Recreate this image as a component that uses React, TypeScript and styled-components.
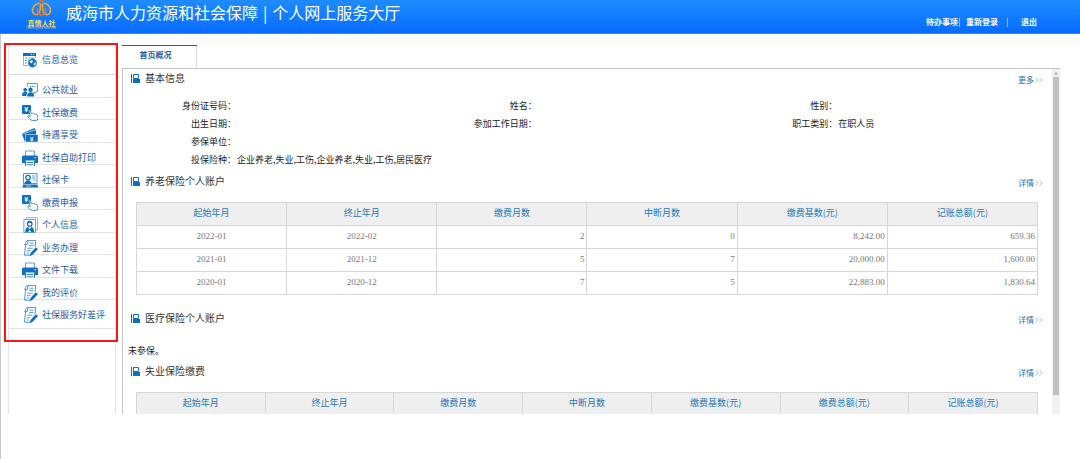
import React from "react";
import styled, { createGlobalStyle } from "styled-components";

const BLUE = "#0f6fc0";
const SANS = '"Noto Sans CJK SC", "Liberation Sans", sans-serif';

const GlobalStyle = createGlobalStyle`
  * { box-sizing: border-box; }
  body { margin: 0; background: #fff; font-family: ${SANS}; font-size: 9px; color: #333; }
  h1, h2, p, ul, dl, dd, dt { margin: 0; padding: 0; font-weight: 400; }
  ul { list-style: none; }
  a { text-decoration: none; }
`;

const Page = styled.div`
  display: flex;
  flex-direction: column;
  height: 100vh;
  border-left: 1px solid #c8c8c8;
`;

const Header = styled.header`
  display: flex;
  align-items: flex-start;
  flex: none;
  height: 34px;
  padding: 0 43px 0 26px;
  margin-left: -1px;
  background: linear-gradient(#1e8cff, #076bff);
  border-bottom: 1px solid #3a86f5;
`;

const Logo = styled.svg`
  flex: none;
  width: 30px;
  height: 32px;
`;

const SiteTitle = styled.h1`
  display: flex;
  align-items: center;
  flex: 1;
  padding: 2px 0 0 10px;
  color: #fff;
  font-size: 16px;
  line-height: 20px;
  white-space: nowrap;
  span { padding: 0 5px; }
`;

const UserLinks = styled.nav`
  display: flex;
  align-items: center;
  padding-top: 15px;
  line-height: 14px;
  font-size: 8px;
`;

const UserLink = styled.a`
  color: #fff;
  font-weight: 700;
`;

const Divider = styled.span<{ $before: number; $after: number }>`
  width: 1px;
  height: 9px;
  margin: 0 ${(p) => p.$after}px 0 ${(p) => p.$before}px;
  background: #8fc0ff;
`;

const Body = styled.div`
  display: flex;
  flex: 1;
  gap: 6px;
  min-height: 0;
  padding: 11px 20px 45px 7px;
`;

const Sidebar = styled.aside`
  flex: none;
  width: 108px;
  border: solid #e4e4e4;
  border-width: 0 1px;
`;

const Menu = styled.nav`
  position: relative;
`;

const Highlight = styled.div`
  position: absolute;
  inset: -2px -3px -13px -5px;
  border: 2px solid #f5161c;
  pointer-events: none;
`;

const MenuItem = styled.li`
  height: 22px;
  border-bottom: 1px solid #e4e4e4;
  &:nth-child(even) { height: 23px; }
  &:first-child { height: 30px; border-color: #d4d4d4; }
  &:last-child { height: 29px; }
`;

const MenuLink = styled.a`
  display: flex;
  align-items: center;
  gap: 4px;
  padding: 6px 0 0 13px;
  line-height: 17px;
  color: #1c5ea8;
  white-space: nowrap;
`;

const IconSvg = styled.svg`
  flex: none;
  width: 16px;
  height: 16px;
`;

const Main = styled.main`
  display: flex;
  flex: 1;
  flex-direction: column;
  min-width: 0;
`;

const Tab = styled.button`
  align-self: flex-start;
  flex: none;
  width: 75px;
  height: 23px;
  padding: 0 8px 3px 0;
  border: 0;
  background: linear-gradient(#1a5cb0, #1a5cb0) top / 100% 1px no-repeat,
    linear-gradient(#dcdcdc, #dcdcdc) right / 1px 100% no-repeat, #fff;
  color: #1c5ea8;
  font: 700 8px/14px ${SANS};
`;

const Panel = styled.div`
  display: flex;
  flex: 1;
  min-height: 0;
  border: solid #c4c4c4;
  border-width: 1px 0 0 1px;
`;

const Content = styled.div`
  flex: 1;
  min-width: 0;
  overflow: hidden;
`;

const ScrollTrack = styled.div`
  display: flex;
  flex-direction: column;
  align-items: center;
  flex: none;
  width: 8px;
  padding-bottom: 19px;
  background: #f1f1f1;
`;

const ScrollArrow = styled.svg`
  flex: none;
  width: 8px;
  height: 8px;
`;

const ScrollThumb = styled.div`
  flex: 1;
  width: 6px;
  background: #c1c1c1;
`;

const Section = styled.section<{ $top?: number }>`
  padding-top: ${(p) => p.$top ?? 0}px;
`;

const SectionHead = styled.div`
  display: flex;
  align-items: flex-end;
  padding: 0 9px 0 8px;
`;

const SectionIcon = styled.svg`
  width: 9px;
  height: 9px;
  margin-bottom: 4px;
`;

const SectionTitle = styled.h2`
  flex: 1;
  padding-left: 5px;
  font-size: 10px;
  line-height: 18px;
`;

const MoreLink = styled.a`
  display: flex;
  align-items: center;
  gap: 1px;
  color: #2478b8;
  font-size: 8px;
  line-height: 14px;
`;

const Chevrons = styled.svg`
  width: 8px;
  height: 6px;
`;

const InfoList = styled.dl`
  display: grid;
  grid-template-columns: repeat(3, 1fr);
  grid-auto-rows: 18px;
  margin: 10px 14px 0 13px;
  line-height: 18px;
`;

const InfoItem = styled.div<{ $wide?: boolean }>`
  display: flex;
  gap: 1px;
  grid-column: ${(p) => (p.$wide ? "1 / -1" : "auto")};
  dt { width: 100px; text-align: right; color: #222; }
  dd { color: #222; }
`;

const Table = styled.table`
  width: calc(100% - 27px);
  margin: 12px 14px 0 13px;
  table-layout: fixed;
  border-collapse: separate;
  border-spacing: 0;
  border: solid #d6d6d6;
  border-width: 1px 0 0 1px;
  line-height: 14px;
`;

const HeadCell = styled.th`
  height: 23px;
  padding: 0 0 3px;
  border: solid #d6d6d6;
  border-width: 0 1px 1px 0;
  background: #efefef;
  color: #2478b8;
  font-weight: 400;
`;

const Cell = styled.td<{ $right: boolean }>`
  height: 23px;
  padding: 0 2px 3px;
  border: solid #d6d6d6;
  border-width: 0 1px 1px 0;
  color: #777;
  font-family: "Liberation Serif", serif;
  text-align: ${(p) => (p.$right ? "right" : "center")};
`;

const Notice = styled.p`
  padding: 16px 0 0 5px;
  line-height: 16px;
  color: #222;
`;

type IconName = "overview" | "jobs" | "pay" | "benefit" | "print" | "card" | "profile" | "form";

const shapes: Record<IconName, React.ReactNode> = {
  overview: (
    <>
      <path d="M1 1h13v3H1z" fill={BLUE} />
      <path d="M9 2.500h1M11 2.500h1" stroke="#fff" />
      <path d="M1.500 4v9.500H6M13.500 4v2" fill="none" stroke="#5b9bd3" strokeWidth=".7" />
      <path d="M3 6h2M6 6h2M9 6h3M3 8.500h2M6 8.500h1M3 11h2" stroke="#5b9bd3" />
      <circle cx="10.500" cy="11" r="4.400" fill={BLUE} />
      <path d="M7.500 9.500l2.500-1.500 1 1.500-1.800 2zM12 11l2-.8-.8 3-1.500 0z" fill="#fff" />
    </>
  ),
  jobs: (
    <>
      <path d="M5.500 4.500v-3h10v8.500h-2l-1 1.500-.6-1.500H11" fill="none" stroke="#3d8acb" strokeWidth=".8" />
      <path d="M8 4.500h1M10.200 4.500h1M12.400 4.500h1" stroke={BLUE} />
      <circle cx="3.200" cy="7.800" r="1.900" fill={BLUE} />
      <circle cx="8.500" cy="7.800" r="2.200" fill={BLUE} />
      <path d="M0 14c0-3 1-4.300 3.300-4.300 1 0 1.700.4 2.200 1C4.700 11.500 4.500 12.500 4.500 14z" fill={BLUE} />
      <path d="M5.200 14.500c0-3 1.200-4.300 3.500-4.300s3.500 1.300 3.500 4.300z" fill={BLUE} />
    </>
  ),
  pay: (
    <>
      <rect x="0" y="0" width="9" height="9" rx="1" fill={BLUE} />
      <text x="4.300" y="7" fill="#fff" fontSize="7" fontWeight="700" textAnchor="middle" fontFamily="Liberation Sans">¥</text>
      <path d="M6.800 5.600c.9-.8 1.700-.2 1.900.6l.7 2.600c.5-.7 1.600-.6 1.900.1.600-.5 1.600-.3 1.900.4.800-.3 1.900 0 2.100.8.600 1.500.6 2.800.1 5l-5.200.6c-1.500-.9-3.200-2.200-4.300-3.500-.6-.9.400-1.900 1.400-1.200l1 .6z" fill="#fff" stroke="#2f82c8" strokeWidth=".9" />
    </>
  ),
  benefit: (
    <>
      <path d="M0 6.500L12.500 1l1.500 2.500L5 7z" fill={BLUE} />
      <path d="M0 7l14-3.500V9L3 15z" fill={BLUE} />
      <path d="M3.500 7.500H16V15H3.500z" fill={BLUE} stroke="#fff" strokeWidth=".5" />
      <path d="M13 2.900L1.500 6.700" stroke="#fff" strokeWidth=".6" />
      <text x="9.700" y="13.700" fill="#fff" fontSize="6" fontWeight="700" textAnchor="middle" fontFamily="Liberation Sans">¥</text>
    </>
  ),
  print: (
    <>
      <path d="M3.500 6V1h9v5" fill="#fff" stroke="#3d8acb" strokeWidth=".8" />
      <path d="M0 7q0-1.500 1.500-1.500h13Q16 5.500 16 7v6H0z" fill={BLUE} />
      <path d="M3.200 10.500h9.600V16H3.200z" fill="#fff" />
      <path d="M3.500 16v-5.200M12.500 16v-5.200M4.800 12.500h6.400M4.800 14.800h6.400" stroke={BLUE} strokeWidth=".9" />
      <path d="M12.500 7.800h1.700" stroke="#fff" strokeWidth=".9" />
    </>
  ),
  card: (
    <>
      <path d="M1.500 1.500h13.500v10H1.500z" fill="none" stroke="#3d8acb" strokeWidth=".9" />
      <circle cx="6" cy="5.500" r="2.200" fill="#fff" stroke={BLUE} strokeWidth="1.300" />
      <path d="M2.500 12c.2-2.500 1.500-3.700 3.500-3.700s3.300 1.200 3.500 3.700z" fill={BLUE} />
      <path d="M9.800 4h3.700M9.800 6h3.700M10.500 8h3" stroke="#3d8acb" strokeWidth=".8" />
      <path d="M1 12.500h14.500l.5 3H.5z" fill={BLUE} />
      <path d="M4 14h5" stroke="#fff" strokeWidth=".7" />
    </>
  ),
  profile: (
    <>
      <path d="M4 2.500V.7h11.500v12.600h-1.500" fill="none" stroke="#5b9bd3" strokeWidth=".7" />
      <path d="M1.900 2.500h11.600v13H1.900z" fill="#fff" stroke="#3d8acb" strokeWidth=".8" />
      <circle cx="7.700" cy="6.900" r="2.300" fill="#fff" stroke={BLUE} strokeWidth="1.300" />
      <path d="M5.200 6.500q0-2.800 2.500-2.800T10.200 6.500L7.700 5.600z" fill={BLUE} />
      <path d="M3.200 15c.2-3.500 1.200-4.700 3-5L7.700 12.500 9.200 10c1.800.3 2.800 1.500 3 5h-3l-1.500-2-1.500 2z" fill={BLUE} />
    </>
  ),
  form: (
    <>
      <path d="M5 .6h8.800L13 7M5 .6C4 2 3 3 2.700 4.600h2.600L6 .8M3.600 4.600L2.500 15.200H9.500" fill="none" stroke="#3d8acb" strokeWidth=".9" />
      <path d="M7.500 3.200h4M7 5.600h4.500M5.200 8.200h5.500M5 10.700h3.500M4.800 13h2" stroke="#4a93cf" strokeWidth=".9" />
      <path d="M13.800 7.300l2.200 1.800-5 5.400-3.200 1.500.7-3z" fill={BLUE} />
    </>
  ),
};

const Icon = ({ name }: { name: IconName }) => (
  <IconSvg viewBox="0 0 16 16" aria-hidden="true">
    {shapes[name]}
  </IconSvg>
);

const menu: [IconName, string][] = [
  ["overview", "信息总览"],
  ["jobs", "公共就业"],
  ["pay", "社保缴费"],
  ["benefit", "待遇享受"],
  ["print", "社保自助打印"],
  ["card", "社保卡"],
  ["pay", "缴费申报"],
  ["profile", "个人信息"],
  ["form", "业务办理"],
  ["print", "文件下载"],
  ["form", "我的评价"],
  ["form", "社保服务好差评"],
];

const info: { label: string; value?: string; wide?: boolean }[] = [
  { label: "身份证号码" },
  { label: "姓名" },
  { label: "性别" },
  { label: "出生日期" },
  { label: "参加工作日期" },
  { label: "职工类别", value: "在职人员" },
  { label: "参保单位", wide: true },
  { label: "投保险种", value: "企业养老,失业,工伤,企业养老,失业,工伤,居民医疗", wide: true },
];

const pensionHead = ["起始年月", "终止年月", "缴费月数", "中断月数", "缴费基数(元)", "记账总额(元)"];
const pensionRows = [
  ["2022-01", "2022-02", "2", "0", "8,242.00", "659.36"],
  ["2021-01", "2021-12", "5", "7", "20,000.00", "1,600.00"],
  ["2020-01", "2020-12", "7", "5", "22,883.00", "1,830.64"],
];
const joblessHead = ["起始年月", "终止年月", "缴费月数", "中断月数", "缴费基数(元)", "缴费总额(元)", "记账总额(元)"];

const Heading = ({ title, link }: { title: string; link: string }) => (
  <SectionHead>
    <SectionIcon viewBox="0 0 9 9" aria-hidden="true">
      <path d="M0 0h1v9H0z" fill={BLUE} />
      <path d="M2.500.5h5v4h-5z" fill="#fff" stroke={BLUE} />
      <path d="M2 5h7v4H2z" fill={BLUE} />
    </SectionIcon>
    <SectionTitle>{title}</SectionTitle>
    <MoreLink href="#">
      {link}
      <Chevrons viewBox="0 0 8 6" aria-hidden="true">
        <path d="M.5.5L3.300 3 .5 5.500M4.500.5L7.300 3 4.500 5.500" fill="none" stroke="#8db9da" strokeWidth=".8" />
      </Chevrons>
    </MoreLink>
  </SectionHead>
);

const DataTable = ({ head, rows = [] }: { head: string[]; rows?: string[][] }) => (
  <Table>
    <thead>
      <tr>
        {head.map((h) => (
          <HeadCell key={h} scope="col">{h}</HeadCell>
        ))}
      </tr>
    </thead>
    <tbody>
      {rows.map((row) => (
        <tr key={row[0]}>
          {row.map((value, i) => (
            <Cell key={i} $right={i > 1}>{value}</Cell>
          ))}
        </tr>
      ))}
    </tbody>
  </Table>
);

export default function App() {
  return (
    <Page>
      <GlobalStyle />
      <Header>
        <Logo viewBox="0 0 30 32" aria-label="真情人社">
          <circle cx="15.500" cy="0" r="2.400" fill="#f0641e" />
          <g fill="none" strokeWidth="1.500">
            <path d="M13.500 3C7 4.500 5 10 7.500 13.500c2.500 2.500 6.500.5 6.800-4L14.500 3.500" stroke="#f7a428" />
            <path d="M17.500 3c6.500 1.500 8.500 7 6 10.500-2.500 2.500-6.500.5-6.800-4L16.500 3.500" stroke="#f7a428" />
            <path d="M11.500 8c-.7 3.500 1.300 7 4 7s4.700-3.500 4-7" stroke="#f0741e" />
          </g>
          <text x="15.500" y="25.500" fill="#f4dc50" fontSize="7" fontWeight="700" textAnchor="middle">真情人社</text>
          <text x="15.500" y="29" fill="#c3c994" fontSize="3" textAnchor="middle" fontFamily="Liberation Sans">ZHEN QING REN SHE</text>
        </Logo>
        <SiteTitle>
          威海市人力资源和社会保障<span>|</span>个人网上服务大厅
        </SiteTitle>
        <UserLinks>
          <UserLink href="#">待办事项</UserLink>
          <Divider $before={1} $after={6} />
          <UserLink href="#">重新登录</UserLink>
          <Divider $before={9} $after={13} />
          <UserLink href="#">退出</UserLink>
        </UserLinks>
      </Header>
      <Body>
        <Sidebar>
          <Menu>
            <ul>
              {menu.map(([icon, label]) => (
                <MenuItem key={label}>
                  <MenuLink href="#">
                    <Icon name={icon} />
                    {label}
                  </MenuLink>
                </MenuItem>
              ))}
            </ul>
            <Highlight />
          </Menu>
        </Sidebar>
        <Main>
          <Tab type="button">首页概况</Tab>
          <Panel>
            <Content>
              <Section>
                <Heading title="基本信息" link="更多" />
                <InfoList>
                  {info.map((item) => (
                    <InfoItem key={item.label} $wide={item.wide}>
                      <dt>{item.label}：</dt>
                      <dd>{item.value}</dd>
                    </InfoItem>
                  ))}
                </InfoList>
              </Section>
              <Section $top={3}>
                <Heading title="养老保险个人账户" link="详情" />
                <DataTable head={pensionHead} rows={pensionRows} />
              </Section>
              <Section $top={14}>
                <Heading title="医疗保险个人账户" link="详情" />
                <Notice>未参保。</Notice>
              </Section>
              <Section $top={3}>
                <Heading title="失业保险缴费" link="详情" />
                <DataTable head={joblessHead} />
              </Section>
            </Content>
            <ScrollTrack>
              <ScrollArrow viewBox="0 0 8 8" aria-hidden="true">
                <path d="M2 5.500L4 3l2 2.500z" fill="#a3a3a3" />
              </ScrollArrow>
              <ScrollThumb />
            </ScrollTrack>
          </Panel>
        </Main>
      </Body>
    </Page>
  );
}
